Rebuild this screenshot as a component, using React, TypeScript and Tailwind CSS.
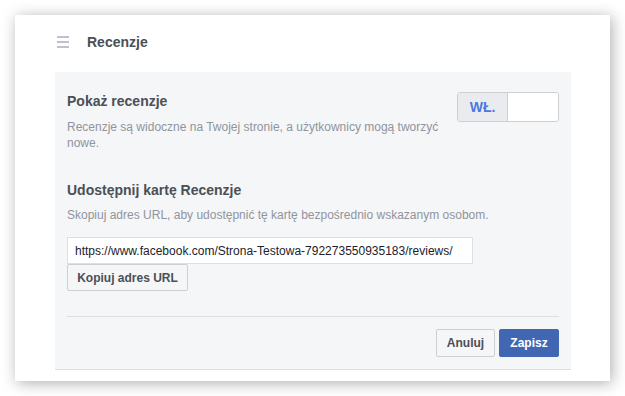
import React from "react";

export default function App() {
  return (
    <div
      className="w-[625px] h-[396px] bg-white pt-[15px] pl-[15px] overflow-hidden"
      style={{ fontFamily: '"Liberation Sans", Arial, sans-serif' }}
    >
      <div className="w-[595px] h-[366px] bg-white shadow-[2px_2px_14px_rgba(0,0,0,0.32)]">
        {/* Header */}
        <div className="h-[57px] pb-[3px] pl-[42px] flex items-center">
          <div className="flex flex-col gap-[3px] w-[12px]">
            <div className="h-[2px] bg-[#bec2c9]" />
            <div className="h-[2px] bg-[#bec2c9]" />
            <div className="h-[2px] bg-[#bec2c9]" />
          </div>
          <div className="ml-[18px] text-[14px] leading-[18px] font-bold text-[#4b4f56]">
            Recenzje
          </div>
        </div>

        {/* Panel */}
        <div className="ml-[40px] w-[516px] bg-[#f5f6f7] border-b border-[#dddfe2] px-3 pt-5 pb-3">
          <div className="flex justify-between items-start">
            <div>
              <div className="text-[14px] leading-[18px] font-bold text-[#4b4f56]">
                Pokaż recenzje
              </div>
              <div className="mt-[9px] w-[385px] text-[12px] leading-[16px] text-[#90949c]">
                Recenzje są widoczne na Twojej stronie, a użytkownicy mogą tworzyć nowe.
              </div>
            </div>
            <div className="flex w-[102px] h-[30px] border border-[#ccd0d5] rounded-[3px] overflow-hidden">
              <div className="w-[50px] bg-[#e9ebee] border-r border-[#ccd0d5] flex items-center justify-center text-[14px] font-bold text-[#4b78e6]">
                WŁ.
              </div>
              <div className="flex-1 bg-white" />
            </div>
          </div>

          <div className="mt-[30px] text-[14px] leading-[18px] font-bold text-[#4b4f56]">
            Udostępnij kartę Recenzje
          </div>
          <div className="mt-[8px] text-[12px] leading-[16px] text-[#90949c]">
            Skopiuj adres URL, aby udostępnić tę kartę bezpośrednio wskazanym osobom.
          </div>

          <div className="mt-[14px] w-[406px] h-[27px] bg-white border border-[#dddfe2] flex items-center pl-[7px] text-[12px] text-[#1d2129]">
            https://www.facebook.com/Strona-Testowa-792273550935183/reviews/
          </div>
          <button className="w-[121px] h-[27px] bg-[#f5f6f7] border border-[#ccd0d5] rounded-[2px] text-[12px] font-bold text-[#4b4f56] flex items-center justify-center">
            Kopiuj adres URL
          </button>

          <div className="mt-[25px] border-t border-[#dddfe2]" />

          <div className="mt-[12px] flex justify-end gap-[4px]">
            <button className="w-[59px] h-[28px] bg-[#f5f6f7] border border-[#ccd0d5] rounded-[2px] text-[12px] font-bold text-[#4b4f56] flex items-center justify-center">
              Anuluj
            </button>
            <button className="w-[60px] h-[28px] bg-[#4267b2] border border-[#4267b2] rounded-[2px] text-[12px] font-bold text-white flex items-center justify-center">
              Zapisz
            </button>
          </div>
        </div>
      </div>
    </div>
  );
}
